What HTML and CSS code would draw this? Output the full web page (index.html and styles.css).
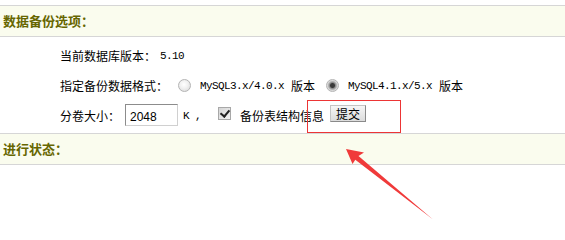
FILE: index.html
```html
<!DOCTYPE html>
<html lang="zh-CN">
<head>
  <meta charset="UTF-8">
  <title>数据备份</title>
  <link rel="stylesheet" href="styles.css">
</head>
<body>
  <div class="panel-title">数据备份选项：</div>

  <div class="options">
    <div class="row">
      <span class="label">当前数据库版本：</span>
      <span class="mono version">5.10</span>
    </div>
    <div class="row">
      <span class="label">指定备份数据格式：</span>
      <label class="choice first">
        <input type="radio" name="fmt" value="mysql40">
        <span class="mono">MySQL3.x/4.0.x</span><span class="suffix">版本</span>
      </label>
      <label class="choice second">
        <input type="radio" name="fmt" value="mysql41" checked>
        <span class="mono">MySQL4.1.x/5.x</span><span class="suffix">版本</span>
      </label>
    </div>
    <div class="row">
      <span class="label">分卷大小：</span>
      <input type="text" class="size-input" value="2048">
      <span class="mono unit">K ,</span>
      <label class="choice struct">
        <input type="checkbox" checked>
        <span>备份表结构信息</span>
      </label>
      <button class="submit-btn">提交</button>
    </div>
  </div>

  <div class="panel-title">进行状态：</div>

  <!-- annotation drawn over the page -->
  <div class="mark-box"></div>
  <svg class="mark-arrow" width="565" height="240" viewBox="0 0 565 240">
    <polygon points="346,149 364,152.5 358.5,155.9 433,219.5 355.3,159.7 352.5,164" fill="#f03a3a"/>
  </svg>
</body>
</html>
```

FILE: styles.css
```css
body {
  margin: 0;
  padding-top: 5px;
  font-family: "Noto Sans CJK SC", "Liberation Sans", sans-serif;
  font-size: 12px;
  color: #000;
  background: #fff;
}

.panel-title {
  height: 30px;
  line-height: 30px;
  padding-left: 3px;
  border-top: 1px solid #d6d6d6;
  border-bottom: 1px solid #d6d6d6;
  background-color: #fafcee;
  color: #666600;
  font-size: 13px;
  font-weight: bold;
}

.options {
  padding: 3px 0 3px 60px;
}

.row {
  display: flex;
  align-items: center;
  height: 30px;
}

.mono {
  font-family: "Liberation Mono", monospace;
  font-size: 11px;
  letter-spacing: -0.6px;
  padding-top: 2px;
}

.version {
  margin-left: 4px;
}

.choice {
  display: flex;
  align-items: center;
}

.choice.first {
  margin-left: 10px;
}

.choice.second {
  margin-left: 11px;
}

.choice .suffix {
  margin-left: 7px;
}

input[type="radio"] {
  appearance: none;
  margin: 0 9px 0 0;
  width: 13px;
  height: 13px;
  border: 1px solid #b4b4b4;
  border-radius: 50%;
  background: radial-gradient(circle at 45% 40%, #ffffff 0, #f2f2f2 40%, #d6d6d6 100%);
  box-sizing: border-box;
}

input[type="radio"]:checked {
  background: radial-gradient(circle, #3a3a3a 0, #3a3a3a 2px, #8c8c8c 3px, #d8d8d8 5px, #ececec 100%);
}

.size-input {
  margin-left: 5px;
  width: 53px;
  height: 22px;
  padding: 3px 4px 0;
  box-sizing: border-box;
  border: 1px solid;
  border-color: #8c8c8c #d0d0d0 #d0d0d0 #8c8c8c;
  font-family: "Liberation Sans", sans-serif;
  font-size: 12px;
}

.unit {
  margin-left: 5px;
}

.choice.struct {
  margin-left: 17px;
}

input[type="checkbox"] {
  appearance: none;
  position: relative;
  margin: 0 9px 4px 0;
  width: 13px;
  height: 13px;
  border: 1px solid #a8a8a8;
  background: linear-gradient(135deg, #d4d4d4, #f4f4f4);
  box-sizing: border-box;
}

input[type="checkbox"]:checked::after {
  content: "";
  position: absolute;
  left: 3px;
  top: 0;
  width: 4px;
  height: 7px;
  border: solid #222;
  border-width: 0 2px 2px 0;
  transform: rotate(40deg);
}

.submit-btn {
  margin-left: 6px;
  margin-bottom: 3px;
  width: 36px;
  height: 17px;
  padding: 0;
  border: 1px solid;
  border-color: #c4c4c4 #8a8a8a #8a8a8a #c4c4c4;
  background: linear-gradient(#f6f6f6, #dcdcdc);
  font-family: "Noto Sans CJK SC", sans-serif;
  font-size: 12px;
  line-height: 15px;
  color: #000;
}

.mark-box {
  position: absolute;
  left: 307px;
  top: 100px;
  width: 94px;
  height: 33px;
  box-sizing: border-box;
  border: 1px solid #ec3535;
}

.mark-arrow {
  position: absolute;
  left: 0;
  top: 0;
  pointer-events: none;
}
```
